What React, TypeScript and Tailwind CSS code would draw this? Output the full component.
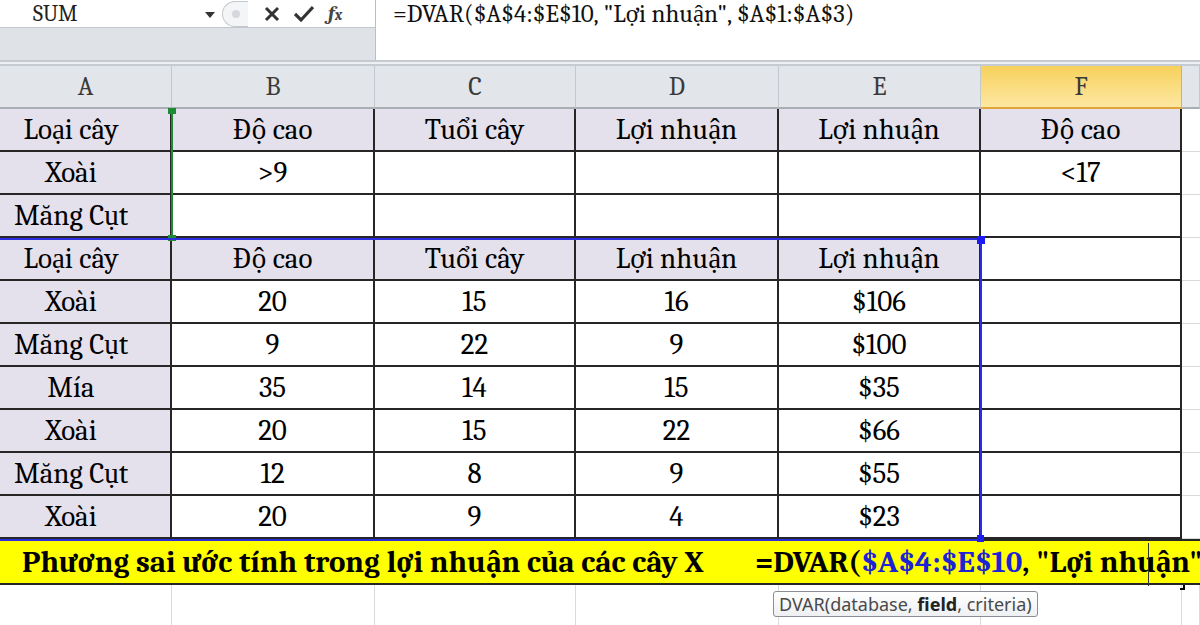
const cols = "grid-cols-[172px_203px_201px_203px_202px_201px_18px]";

const letters = ["A", "B", "C", "D", "E", "F", ""];

type Row = { cells: string[]; lav: boolean[] };

const rows: Row[] = [
  { cells: ["Loại cây", "Độ cao", "Tuổi cây", "Lợi nhuận", "Lợi nhuận", "Độ cao"], lav: [true, true, true, true, true, true] },
  { cells: ["Xoài", ">9", "", "", "", "<17"], lav: [true, false, false, false, false, false] },
  { cells: ["Măng Cụt", "", "", "", "", ""], lav: [true, false, false, false, false, false] },
  { cells: ["Loại cây", "Độ cao", "Tuổi cây", "Lợi nhuận", "Lợi nhuận", ""], lav: [true, true, true, true, true, false] },
  { cells: ["Xoài", "20", "15", "16", "$106", ""], lav: [true, false, false, false, false, false] },
  { cells: ["Măng Cụt", "9", "22", "9", "$100", ""], lav: [true, false, false, false, false, false] },
  { cells: ["Mía", "35", "14", "15", "$35", ""], lav: [true, false, false, false, false, false] },
  { cells: ["Xoài", "20", "15", "22", "$66", ""], lav: [true, false, false, false, false, false] },
  { cells: ["Măng Cụt", "12", "8", "9", "$55", ""], lav: [true, false, false, false, false, false] },
  { cells: ["Xoài", "20", "9", "4", "$23", ""], lav: [true, false, false, false, false, false] },
];

function FormulaBar() {
  return (
    <div className="flex h-[60px]">
      <div className="flex w-[376px] flex-col border-r border-[#b9bec6]">
        <div className="flex h-[27px] items-center bg-white">
          <span className="ml-[33px] w-[172px] text-[22px] leading-none text-[#222]">SUM</span>
          <svg width="10" height="6" viewBox="0 0 10 6" className="mt-[2px]">
            <path d="M0 0h10L5 6z" fill="#333" />
          </svg>
          <div className="ml-[7px] flex h-[26px] w-[26px] items-center justify-center rounded-l-full border border-r-0 border-[#c4c9cf] bg-[#f4f5f7]">
            <span className="h-[8px] w-[8px] rounded-full bg-[#d5d8dc]" />
          </div>
          <svg width="16" height="16" viewBox="0 0 16 16" className="ml-[16px]">
            <path d="M2 2l12 12M14 2L2 14" stroke="#333" strokeWidth="3" />
          </svg>
          <svg width="20" height="18" viewBox="0 0 20 18" className="ml-[14px]">
            <path d="M1 9l6 6L19 2" stroke="#333" strokeWidth="3.2" fill="none" />
          </svg>
          <span className="ml-[14px] text-[21px] font-bold italic leading-none text-[#444]">
            f<span className="text-[15px]">x</span>
          </span>
        </div>
        <div className="flex-1 border-t border-[#c2c7ce] bg-[#dfe3e8]" />
      </div>
      <div className="flex-1 bg-white pl-[17px] text-[25px] leading-[28px] text-[#111]">
        =DVAR($A$4:$E$10, "Lợi nhuận", $A$1:$A$3)
      </div>
    </div>
  );
}

function Header() {
  return (
    <div className={`grid ${cols} h-[43px]`}>
      {letters.map((l, i) => (
        <div
          key={i}
          className={
            i === 5
              ? "flex items-center justify-center border-r border-b-2 border-r-[#c9b27a] border-b-[#e0a43a] bg-gradient-to-b from-[#f7d15a] to-[#fde7a0] text-[26px] leading-none text-[#3a3a3a]"
              : "flex items-center justify-center border-r border-b-2 border-r-[#c3c8ce] border-b-[#a9aeb5] bg-[#e2e5ea] text-[26px] leading-none text-[#3a3a3a]"
          }
        >
          {l}
        </div>
      ))}
    </div>
  );
}

function DataRow({ row }: { row: Row }) {
  return (
    <div className={`grid ${cols} h-[43px]`}>
      {row.cells.map((c, i) => (
        <div
          key={i}
          className={`flex items-center justify-center border-r-2 border-b-2 border-[#262626] text-[29px] leading-none text-black ${
            row.lav[i] ? "bg-[#e4e0ec]" : "bg-white"
          } ${i === 0 ? "pr-[28px]" : ""}`}
        >
          {c}
        </div>
      ))}
      <div className="border-b border-[#d9d9d9] bg-white" />
    </div>
  );
}

export default function App() {
  return (
    <div className="relative h-[625px] w-[1200px] overflow-hidden bg-white font-serif">
      <FormulaBar />
      <div className="h-[6px] border-y-2 border-[#c6cbd1] bg-[#eef0f3]" />
      <Header />
      {rows.map((r, i) => (
        <DataRow key={i} row={r} />
      ))}
      <div className="flex h-[46px] items-center overflow-hidden whitespace-nowrap border-y-2 border-[#262626] bg-[#ffff00] text-[31px] font-bold leading-none text-black">
        <span className="w-[755px] shrink-0 pl-[22px]">Phương sai ước tính trong lợi nhuận của các cây X</span>
        <span>
          =DVAR(<span className="text-[#1c22d6]">$A$4:$E$10</span>, "Lợi nhuận", $A$1:$A$3)
        </span>
      </div>
      <div className={`grid ${cols} h-[40px]`}>
        {letters.map((_, i) => (
          <div key={i} className="border-r border-[#dadada]" />
        ))}
      </div>

      {/* range highlight $A$1:$A$3 */}
      <div className="absolute left-[171px] top-[109px] h-[130px] w-[2px] bg-[#1f8a34]" />
      <div className="absolute left-[168px] top-[108px] h-[6px] w-[8px] bg-[#1f8a34]" />
      <div className="absolute left-[168px] top-[235px] h-[6px] w-[8px] bg-[#1f8a34]" />

      {/* range highlight $A$4:$E$10 */}
      <div className="absolute left-0 top-[238px] h-[303px] w-[982px] border-y-2 border-r-2 border-[#2c2ce0]" />
      <div className="absolute left-[977px] top-[236px] h-[8px] w-[8px] bg-[#1c1cf0]" />
      <div className="absolute left-[977px] top-[535px] h-[7px] w-[7px] bg-[#1c1cf0]" />

      {/* edit caret + box corner */}
      <div className="absolute left-[1148px] top-[543px] h-[43px] w-px bg-[#333]" />
      <div className="absolute left-[1180px] top-[585px] h-[5px] w-[5px] border-b-2 border-r-2 border-black" />

      {/* function tooltip */}
      <div className="absolute left-[773px] top-[591px] flex h-[26px] items-center rounded-[3px] border border-[#8a8f96] bg-gradient-to-b from-white to-[#eef0f3] px-[5px] font-sans text-[18px] leading-none text-[#4a4a4a]">
        DVAR(database,&nbsp;<b className="font-bold text-[#222]">field</b>, criteria)
      </div>
    </div>
  );
}
